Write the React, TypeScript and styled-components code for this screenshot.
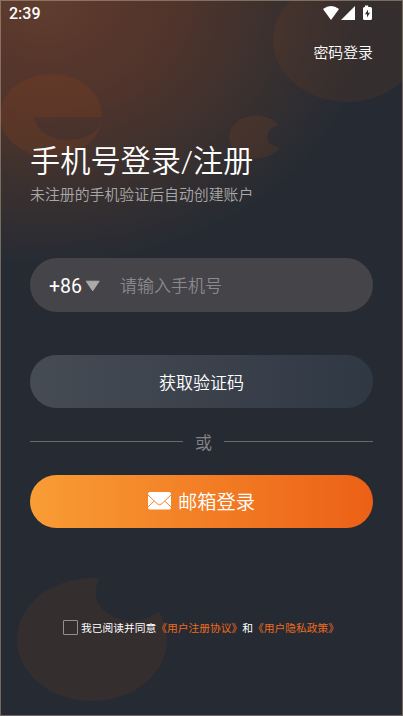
import React from "react";
import styled, { createGlobalStyle } from "styled-components";

const Global = createGlobalStyle`
  * { box-sizing: border-box; }
  html, body { margin: 0; padding: 0; background: #262b33; }
  button, input { font: inherit; color: inherit; border: 0; padding: 0; margin: 0; background: none; outline: none; }
`;

const Screen = styled.div`
  position: relative;
  width: 403px;
  height: 716px;
  overflow: hidden;
  display: flex;
  flex-direction: column;
  padding: 0 30px;
  color: #fff;
  font-family: Roboto, "Noto Sans CJK SC", sans-serif;
  background: radial-gradient(ellipse 330px 265px at 44px 0, #5f3d2f 0, #5a382c 16%, #50342c 40%, #42322d 60%, #352f30 78%, #262b33 100%);
  &::after {
    content: "";
    position: absolute;
    inset: 0;
    border: 1px solid rgba(190, 170, 145, 0.5);
    pointer-events: none;
  }
`;

const Backdrop = styled.svg`
  position: absolute;
  inset: 0;
`;

const StatusBar = styled.header`
  position: relative;
  height: 28px;
  margin: 0 -21px;
  display: flex;
  justify-content: space-between;
  font-size: 16px;
  line-height: 28px;
  font-weight: 500;
`;

const StatusIcons = styled.svg`
  margin-right: 6px;
`;

const TopBar = styled.div`
  position: relative;
  height: 50px;
  display: flex;
  justify-content: flex-end;
  align-items: center;
`;

const TextButton = styled.button`
  font-size: 14.9px;
  line-height: 22px;
  font-weight: 350;
`;

const Heading = styled.h1`
  position: relative;
  margin: 62px 0 0;
  font-size: 30.2px;
  line-height: 44px;
  font-weight: 350;
  white-space: nowrap;
`;

const Subtitle = styled.p`
  position: relative;
  margin: 0;
  font-size: 14.9px;
  line-height: 22px;
  font-weight: 350;
  color: #a9a8a8;
  white-space: nowrap;
`;

const PhoneField = styled.div`
  position: relative;
  margin-top: 52px;
  height: 54px;
  flex: none;
  border-radius: 27px;
  background: #454448;
  display: flex;
  align-items: center;
  padding-left: 19px;
`;

const CountryCode = styled.button`
  display: flex;
  align-items: center;
  width: 71px;
  font-size: 19.5px;
  gap: 3px;
  padding-top: 2px;
`;

const PhoneInput = styled.input`
  flex: 1;
  min-width: 0;
  font-size: 17px;
  font-weight: 350;
  height: 30px;
  padding-top: 2px;
  &::placeholder { color: #8a898c; opacity: 1; }
`;

const PillButton = styled.button<{ $from: string; $to: string; $top: number; $size: number }>`
  position: relative;
  flex: none;
  height: 53px;
  margin-top: ${(p) => p.$top}px;
  border-radius: 27px;
  display: flex;
  justify-content: center;
  align-items: center;
  gap: 7px;
  padding-bottom: 1px;
  font-size: ${(p) => p.$size}px;
  font-weight: 350;
  background: linear-gradient(90deg, ${(p) => p.$from}, ${(p) => p.$to});
`;

const Divider = styled.div`
  height: 24px;
  margin-top: 21px;
  display: flex;
  align-items: center;
  justify-content: space-between;
  font-size: 17px;
  font-weight: 350;
  color: #858487;
`;

const Rule = styled.span<{ $width: number }>`
  width: ${(p) => p.$width}px;
  height: 1px;
  background: #6b6869;
`;

const Agreement = styled.label`
  position: relative;
  margin: 88px 0 0 33px;
  height: 22px;
  display: flex;
  align-items: center;
  font-size: 10.75px;
  white-space: nowrap;
`;

const CheckBox = styled.span`
  width: 15px;
  height: 15px;
  border: 1px solid #929090;
  border-radius: 1px;
  margin-right: 3px;
`;

const Policy = styled.a`
  color: #ed6a20;
  font-weight: 400;
`;

export default function App() {
  return (
    <>
      <Global />
      <Screen>
        <Backdrop width="403" height="716" viewBox="0 0 403 716">
          <defs>
            <mask id="smile">
              <rect width="403" height="716" fill="#fff" />
              <path d="M34.500 117A34 23 0 0 0 102.500 117Z" fill="#000" />
            </mask>
            <mask id="smallBite">
              <rect width="403" height="716" fill="#fff" />
              <path d="M284 125.500H279Q267.500 127 267.500 136.500Q267.500 146 279 147.500H284Z" fill="#000" />
            </mask>
            <mask id="largeBite">
              <rect width="403" height="716" fill="#fff" />
              <ellipse cx="132" cy="592" rx="36.500" ry="29" fill="#000" />
            </mask>
          </defs>
          <ellipse cx="51" cy="115.500" rx="51" ry="41.500" fill="#a04818" fillOpacity="0.18" mask="url(#smile)" />
          <ellipse cx="347" cy="40" rx="74" ry="62" fill="#a04818" fillOpacity="0.12" />
          <ellipse cx="256" cy="137" rx="27" ry="21.500" fill="#a04818" fillOpacity="0.16" mask="url(#smallBite)" />
          <ellipse cx="92" cy="639.500" rx="75" ry="61.500" fill="#a04818" fillOpacity="0.12" mask="url(#largeBite)" />
        </Backdrop>
        <StatusBar>
          <span>2:39</span>
          <StatusIcons width="66" height="28" viewBox="0 0 66 28" fill="#fff">
            <path d="M1 9Q9 3 17 9L9 20Z" />
            <path d="M33 6V20H19Z" />
            <path d="M43 5.500H46.200V7H48.500Q50 7 50 8.500V18.500Q50 20 48.500 20H42.500Q41 20 41 18.500V8.500Q41 7 42.500 7H43Z" />
            <path d="M46 9.500L43 14.200H45V17.500L48 12.800H46Z" fill="#332d2d" />
          </StatusIcons>
        </StatusBar>
        <TopBar>
          <TextButton>密码登录</TextButton>
        </TopBar>
        <Heading>手机号登录/注册</Heading>
        <Subtitle>未注册的手机验证后自动创建账户</Subtitle>
        <PhoneField>
          <CountryCode>
            +86
            <svg width="16" height="12" viewBox="0 0 16 12">
              <path d="M1.200 1.200H14.200L7.700 10.800Z" fill="#aaa" stroke="#aaa" strokeLinejoin="round" />
            </svg>
          </CountryCode>
          <PhoneInput placeholder="请输入手机号" />
        </PhoneField>
        <PillButton $from="#464c54" $to="#303844" $top={43} $size={17}>
          获取验证码
        </PillButton>
        <Divider>
          <Rule $width={153} />或<Rule $width={149} />
        </Divider>
        <PillButton $from="#f99d35" $to="#ec6016" $top={22} $size={19.3}>
          <svg width="23" height="18" viewBox="0 0 23 18">
            <rect width="23" height="17.500" rx="2" fill="#fff" />
            <path d="M0 3L9.200 11.700Q11.500 14 13.800 11.700L23 3M0 15L6 9.300M23 15L17 9.300" fill="none" stroke="#f38329" strokeWidth="1" />
          </svg>
          邮箱登录
        </PillButton>
        <Agreement>
          <CheckBox />
          我已阅读并同意<Policy>《用户注册协议》</Policy>和<Policy>《用户隐私政策》</Policy>
        </Agreement>
      </Screen>
    </>
  );
}
